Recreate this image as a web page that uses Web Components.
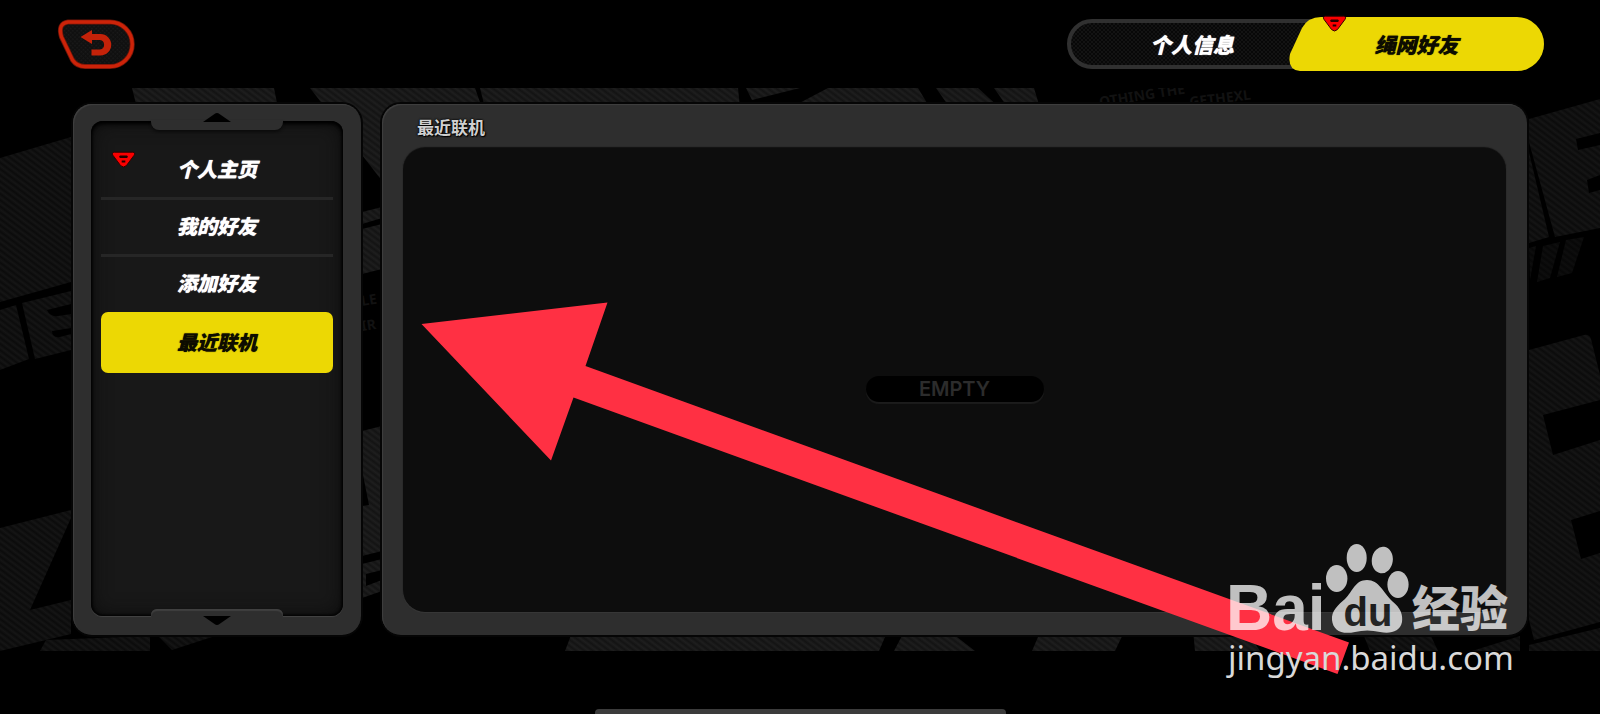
<!DOCTYPE html>
<html lang="zh-CN">
<head>
<meta charset="utf-8">
<meta name="viewport" content="width=device-width, initial-scale=1">
<title>绳网好友</title>
<style>
  html, body { margin: 0; background: #000; }
  body { font-family: "Noto Sans CJK SC", "Noto Sans", sans-serif; color: #fff; }
</style>
</head>
<body>
<game-screen>
  <back-button slot="header"></back-button>
  <tab-switch slot="header">
    <tab-item>个人信息</tab-item>
    <tab-item selected alert>绳网好友</tab-item>
  </tab-switch>
  <side-menu slot="main">
    <menu-item alert>个人主页</menu-item>
    <menu-item>我的好友</menu-item>
    <menu-item>添加好友</menu-item>
    <menu-item selected>最近联机</menu-item>
  </side-menu>
  <content-panel slot="main">
    <span slot="title">最近联机</span>
    <empty-state>EMPTY</empty-state>
  </content-panel>
  <pointer-arrow slot="overlay"></pointer-arrow>
  <site-watermark slot="overlay"></site-watermark>
</game-screen>

<script>
const define = (name, markup, setup) => {
  const template = document.createElement('template');
  template.innerHTML = markup;
  customElements.define(name, class extends HTMLElement {
    constructor() {
      super();
      this.attachShadow({ mode: 'open' }).append(template.content.cloneNode(true));
    }
    connectedCallback() { if (setup) setup(this, this.shadowRoot); }
  });
};

define('alert-badge', `
  <style>
    :host { display: block; width: 25px; height: 17px; }
    svg { display: block; width: 100%; height: 100%; }
  </style>
  <svg viewBox="0 0 25 17" aria-hidden="true">
    <path d="M3.4 1.2H21.6Q24.8 1.500 23 4.4L15.4 14.6Q12.5 17.4 9.6 14.6L2 4.400Q.2 1.500 3.4 1.2Z" fill="#fb0000" stroke="#300" stroke-width="1"/>
    <path d="M9 4.500H16L17 5.800L16 7H9L8 5.800ZM10.700 9.600H14.300V11.400H10.700Z" fill="#240000"/>
  </svg>`);

/* Street-poster lettering behind the panels, cut into striped slabs. */
define('backdrop-art', `
  <style>
    :host { display: block; overflow: hidden; }
    svg { display: block; width: 100%; height: 100%; }
    text { font: 700 14px "Noto Sans", sans-serif; fill: #121212; }
  </style>
  <svg viewBox="0 88 1600 563" preserveAspectRatio="xMidYMid slice" aria-hidden="true">
    <defs>
      <linearGradient id="hi" gradientUnits="userSpaceOnUse" x1="0" y1="0" x2="-3" y2="4" spreadMethod="repeat">
        <stop offset="0" stop-color="#131313"/><stop offset=".5" stop-color="#1e1e1e"/><stop offset="1" stop-color="#131313"/>
      </linearGradient>
      <linearGradient id="lo" gradientUnits="userSpaceOnUse" x1="0" y1="0" x2="-3" y2="4" spreadMethod="repeat">
        <stop offset="0" stop-color="#0b0b0b"/><stop offset=".5" stop-color="#151515"/><stop offset="1" stop-color="#0b0b0b"/>
      </linearGradient>
    </defs>
    <g fill="url(#lo)">
      <path d="M0 158L71 137V282L0 302Z"/>
      <path d="M0 310L16 305L29 359L0 370Z"/>
      <path d="M22 303L71 291V304L47 310Q50 317 58 316L71 314V328L52 331Q52 338 60 337L71 334V350L35 359Z"/>
      <path d="M0 528L71 510V518L30 610L71 600V634L0 651Z"/>
      <path d="M46 640L150 636V651H40Z"/>
      <path d="M158 636H215L172 650Z"/>
      <path d="M1529 119L1600 99V133L1576 139L1578 150L1600 145V175L1587 180L1589 193L1600 190V228L1555 237L1529 142Z"/>
      <path d="M1529 152L1549 237L1529 243Z"/>
      <path d="M1529 350L1584 335Q1589 334 1591 339L1600 375V400L1543 415L1553 455L1600 440V511L1571 520L1581 559L1600 553V622L1534 640L1529 620Z"/>
      <path d="M1529 645L1600 628V651H1529Z"/>
      <path d="M1364 636H1431L1438 651H1370ZM1472 651L1520 636V651Z"/>
    </g>
    <g fill="url(#lo)" opacity=".65">
      <path d="M1529 248L1536 246L1530 280ZM1543 246L1560 242L1550 278L1537 282ZM1566 240L1584 237L1572 273L1557 277Z"/>
    </g>
    <g fill="url(#hi)">
      <path d="M132 88H274L278 108H137Z"/>
      <path d="M310 88H475L482 108H400V204Z"/>
      <path d="M480 88H738L740 108H485Z"/>
      <path d="M746 88H800L752 100ZM828 88H918L930 108H790Z"/>
      <path d="M936 88H978L1000 108H950ZM994 88H1034L1040 108H1008Z"/>
      <path d="M362 212L382 207V218L362 224ZM362 229L382 224V269L362 274Z"/>
      <path d="M362 431L382 426V551L362 556V506L369 505L362 470Z"/>
      <path d="M362 564L382 559V570L366 574V586L382 580V591L362 598Z"/>
      <path d="M573 630H888L879 651H565ZM905 630H948L975 651H894ZM1041 630H1125L1115 651H1032ZM1193 630H1246L1260 651H1195Z"/>
    </g>
    <text transform="translate(1100 107) rotate(-9)">OTHING THE</text>
    <text transform="translate(1190 107) rotate(-7)">GETHEXL</text>
    <text transform="translate(362 306) rotate(-9)">LE</text>
    <text transform="translate(362 331) rotate(-9)">IR</text>
  </svg>`);

define('game-screen', `
  <style>
    :host { display: flex; flex-direction: column; position: relative; min-height: 100vh; overflow: hidden; }
    header { display: flex; justify-content: space-between; align-items: center; height: 88px; padding: 0 56px 0 58px; box-sizing: border-box; }
    main { position: relative; flex: 1; display: flex; gap: 21px; padding: 16px 73px 16px; min-height: 400px; }
    main backdrop-art { position: absolute; inset: 0; }
    footer { display: flex; justify-content: center; align-items: flex-end; height: 63px; }
    footer i { width: 411px; height: 5px; border-radius: 4px 4px 0 0; background: #3b3b3b; }
  </style>
  <header><slot name="header"></slot></header>
  <main><backdrop-art></backdrop-art><slot name="main"></slot></main>
  <footer><i></i></footer>
  <slot name="overlay"></slot>`);

define('back-button', `
  <style>
    :host { display: block; }
    button { display: block; padding: 0; border: 0; background: none; cursor: pointer; }
    svg { display: block; width: 77px; height: 50px; overflow: visible; }
  </style>
  <button type="button" aria-label="返回">
    <svg viewBox="0 0 77 50">
      <defs>
        <pattern id="mesh" width="3" height="3" patternUnits="userSpaceOnUse" patternTransform="rotate(45)">
          <rect width="3" height="3" fill="#101010"/><rect width="1.500" height="1.500" fill="#1b1b1b"/>
        </pattern>
      </defs>
      <path d="M10 3H52A22 22 0 0 1 52 47.500H27Q19 47.500 14.500 41L3.500 18Q-.5 4.500 10 3Z" fill="url(#mesh)" stroke="#701508" stroke-width="5"/>
      <path d="M10 3H52A22 22 0 0 1 52 47.500H27Q19 47.500 14.500 41L3.500 18Q-.5 4.500 10 3Z" fill="none" stroke="#cc2309" stroke-width="3.400"/>
      <path d="M22.500 18L34 11V15H42.500A10.500 10.500 0 0 1 42.500 36.500H33.500V30.500H42A4.800 4.800 0 0 0 42 21H34V25Z" fill="#c42209"/>
    </svg>
  </button>`);

define('tab-switch', `
  <style>
    :host { display: block; }
    nav { display: flex; align-items: center; width: 477px; height: 50px; box-sizing: border-box; border: 4px solid #303030; border-radius: 25px;
      background: repeating-conic-gradient(#131313 0 25%, #080808 0 50%) 0 0 / 4px 4px; }
  </style>
  <nav aria-label="分页"><slot></slot></nav>`);

define('tab-item', `
  <style>
    :host { display: block; position: relative; flex: 1; min-width: 0; }
    :host([selected]) { flex: 0 0 255px; margin-right: -4px; }
    button { position: relative; display: block; width: 100%; height: 54px; padding: 0 0 0 24px; border: 0; background: none; color: #fff;
      font: italic 900 21px/30px "Noto Sans CJK SC", sans-serif; text-shadow: 0 0 1px currentColor; cursor: pointer; }
    :host([selected]) button { padding: 0; color: #0d0c00; }
    svg { display: none; position: absolute; inset: 0; width: 100%; height: 100%; }
    :host([selected]) svg { display: block; }
    span { position: relative; }
    alert-badge { display: none; position: absolute; left: 33px; top: -2px; }
    :host([alert]) alert-badge { display: block; }
  </style>
  <button type="button">
    <svg viewBox="0 0 255 54" preserveAspectRatio="none" aria-hidden="true">
      <path d="M32 0H228A27 27 0 0 1 228 54H11Q-2 53 1 37L13 11Q19 0 32 0Z" fill="#ecd804"/>
    </svg>
    <span><slot></slot></span>
  </button>
  <alert-badge></alert-badge>`, (host, root) => {
    if (host.hasAttribute('selected')) root.querySelector('button').setAttribute('aria-current', 'page');
  });

define('side-menu', `
  <style>
    :host { display: flex; position: relative; flex: 0 0 288px; box-sizing: border-box; padding: 17px 18px 19px; border-radius: 19px;
      background: #2e2e2e; box-shadow: 0 0 0 2px #050505, inset 1px 1px 1px #404040; }
    nav { flex: 1; padding: 20px 10px; border-radius: 12px; background: #181818;
      box-shadow: inset 0 3px 4px #000, inset 0 0 3px 1px #000, inset 0 0 20px #0c0c0c, 0 1px 1px #444; }
    i { position: absolute; left: 78px; right: 78px; height: 10px; display: flex; justify-content: center; background: #2e2e2e; }
    .up { top: 16px; border-radius: 0 0 8px 8px; box-shadow: 0 2px 3px #0b0b0b; align-items: flex-start; }
    .down { bottom: 16px; border-radius: 6px 6px 0 0; box-shadow: inset 0 2px 1px #404040; align-items: flex-end; }
    .up svg { margin-top: -7px; }
    .down svg { margin-bottom: -6px; }
    svg { flex: none; width: 28px; height: 9px; fill: #000; }
  </style>
  <nav aria-label="好友"><slot></slot></nav>
  <i class="up"><svg viewBox="0 0 28 9"><path d="M0 9L11.500 1Q14-.8 16.500 1L28 9Z"/></svg></i>
  <i class="down"><svg viewBox="0 0 28 9"><path d="M0 0H28L16.500 8Q14 9.800 11.500 8Z"/></svg></i>`);

define('menu-item', `
  <style>
    :host { display: block; position: relative; height: 57px; }
    button { display: block; width: 100%; height: 59px; padding: 0; border: 0; border-bottom: 3px solid #262626; background: none; color: #fff;
      font: italic 900 20px/30px "Noto Sans CJK SC", sans-serif; text-shadow: 0 0 1px currentColor; cursor: pointer; }
    :host(:nth-last-of-type(2)) button { border-color: transparent; }
    :host([selected]) button { height: 61px; padding: 0 0 2px; border: 0; border-radius: 7px; background: #ecd804; color: #0d0c00; }
    alert-badge { display: none; position: absolute; left: 10px; top: 10px; }
    :host([alert]) alert-badge { display: block; }
  </style>
  <button type="button"><slot></slot></button>
  <alert-badge></alert-badge>`, (host, root) => {
    if (host.hasAttribute('selected')) root.querySelector('button').setAttribute('aria-current', 'page');
  });

define('content-panel', `
  <style>
    :host { display: flex; flex-direction: column; position: relative; flex: 1; box-sizing: border-box; padding: 0 21px 23px; border-radius: 19px;
      background: #2e2e2e; box-shadow: 0 0 0 2px #050505, inset 1px 1px 1px #404040; }
    h1 { margin: 0; padding: 10px 14px 8px; font: 700 17px/26px "Noto Sans CJK SC", sans-serif; color: #d0d0d0;
      text-shadow: 0 0 2px #000, 0 0 2px #000, 1px 1px 1px #000; }
    section { flex: 1; display: grid; place-items: center; padding-top: 18px; border-radius: 22px; background: #0d0d0d; box-shadow: 0 1px 1px #383838, 0 -1px 1px #111; }
  </style>
  <h1><slot name="title"></slot></h1>
  <section><slot></slot></section>`);

define('empty-state', `
  <style>
    :host { display: block; width: 178px; border-radius: 13px; background: #000; box-shadow: 0 2px 1px #1c1c1c;
      font: 600 20px/26px Inter, sans-serif; color: #2c2c2c; text-align: center; }
  </style>
  <slot></slot>`);

define('pointer-arrow', `
  <style>
    :host { display: block; position: absolute; inset: 0; pointer-events: none; }
    svg { display: block; width: 100%; height: 100%; }
  </style>
  <svg viewBox="0 0 1600 714" aria-hidden="true">
    <path d="M421.500 324L607.500 302.500L585.500 366L1349 642.500L1337.500 674L573.500 397.500L551 460.500Z" fill="#ff3043"/>
  </svg>`);

define('site-watermark', `
  <style>
    :host { display: block; position: absolute; right: 82px; bottom: 34px; width: 292px; pointer-events: none; white-space: nowrap; }
    .logo { display: flex; align-items: flex-end; color: #fff; opacity: .74; }
    .latin { width: 98px; font: 700 64px/56px "Liberation Sans", sans-serif; }
    .paw { display: grid; place-items: end center; width: 88px; height: 92px; }
    .paw > * { grid-area: 1 / 1; }
    svg { display: block; width: 88px; height: 92px; fill: #fff; }
    .du { padding-bottom: 4px; font: 700 40px/40px "Liberation Sans", sans-serif; color: #222; }
    .cjk { font: 900 48px/62px "Noto Sans CJK SC", sans-serif; }
    .url { padding-left: 2px; font: 400 33px/44px "Noto Sans", sans-serif; color: #d9d9d9; }
  </style>
  <div class="logo">
    <div class="latin">Bai</div>
    <div class="paw">
      <svg viewBox="1324 544 88 92" aria-hidden="true">
        <ellipse cx="1336.700" cy="578.500" rx="10.700" ry="13.500"/>
        <ellipse cx="1356.700" cy="558" rx="10" ry="14"/>
        <ellipse cx="1382.300" cy="560" rx="10.500" ry="13.300" transform="rotate(8 1382 560)"/>
        <ellipse cx="1398" cy="584.500" rx="10.600" ry="13.500"/>
        <path d="M1367 580C1379 580 1383 592 1392 601C1401 608 1403 615 1402 622C1400 632 1390 634 1380 632Q1367 629 1355 632C1341 635 1333 630 1332 620C1331 611 1338 605 1345 599C1353 591 1355 580 1367 580Z"/>
      </svg>
      <div class="du">du</div>
    </div>
    <div class="cjk">经验</div>
  </div>
  <div class="url">jingyan.baidu.com</div>`);
</script>
</body>
</html>
